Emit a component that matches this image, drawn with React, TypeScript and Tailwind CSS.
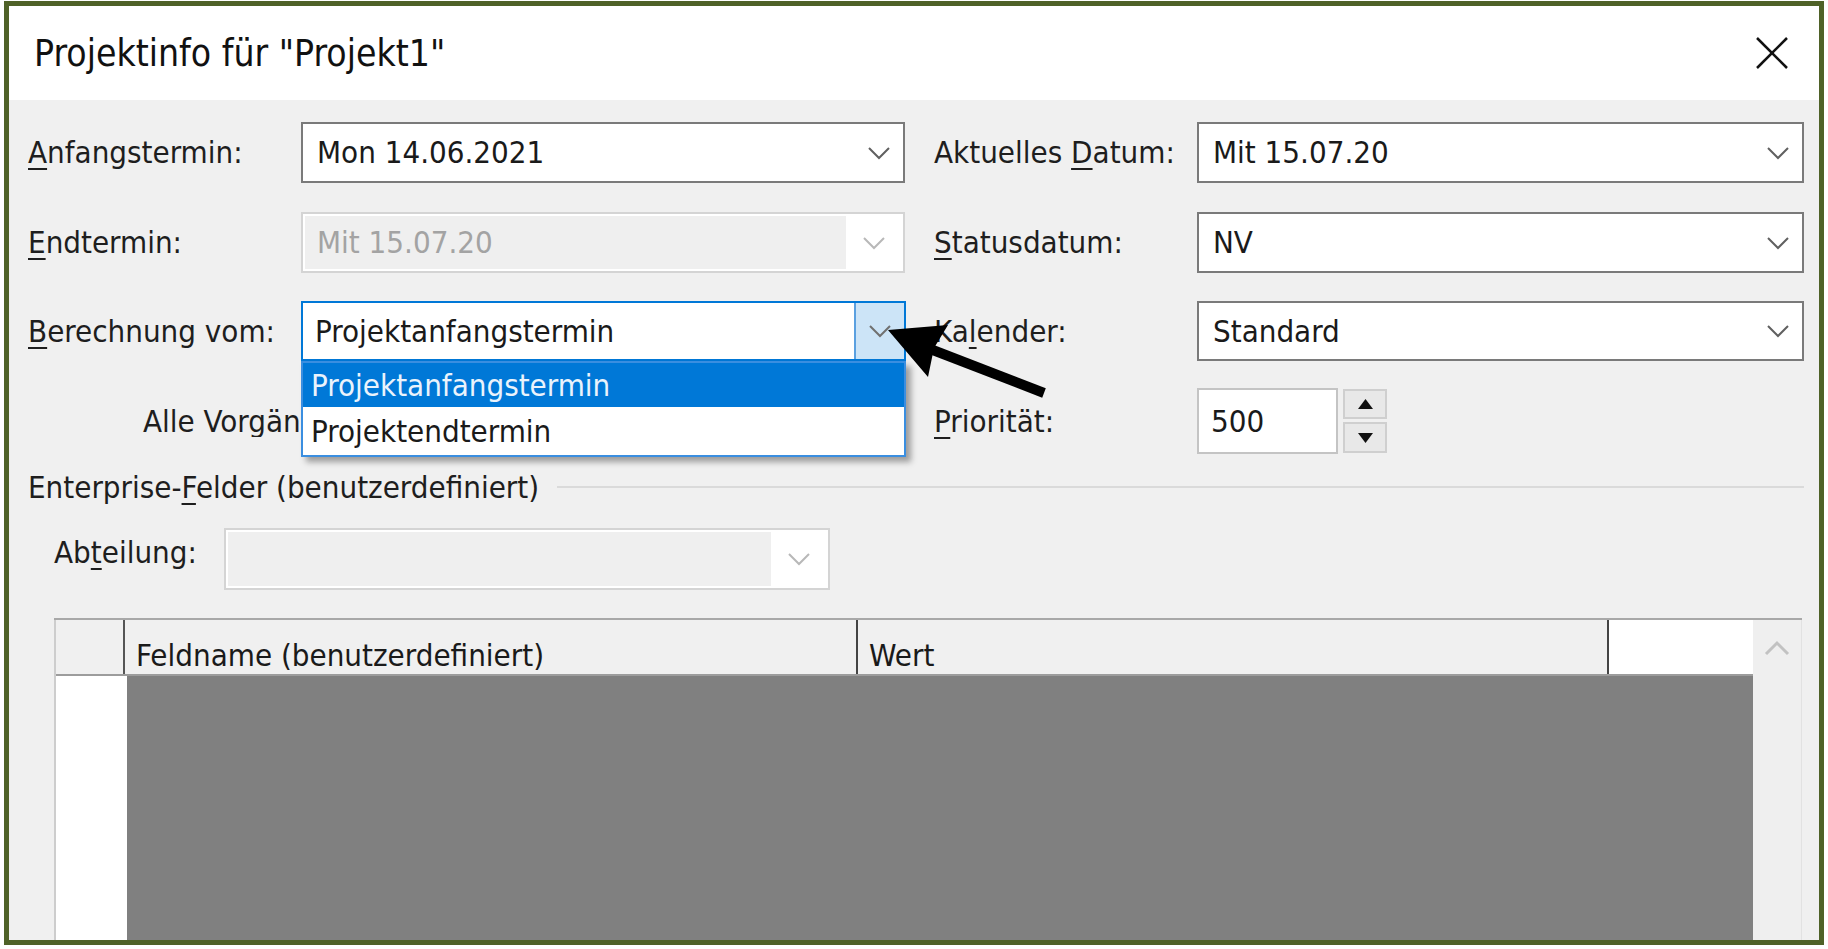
import React from "react";

const FONT = "font-['DejaVu_Sans_Condensed','Liberation_Sans_Narrow',sans-serif]";

function Chevron({ color = "#606060" }: { color?: string }) {
  return (
    <svg width="24" height="14" viewBox="0 0 24 14">
      <polyline points="2,2 12,12 22,2" fill="none" stroke={color} strokeWidth="2" />
    </svg>
  );
}

function U({ children }: { children: React.ReactNode }) {
  return <span className="underline decoration-2 underline-offset-[5px]">{children}</span>;
}

function Combo({ value, width }: { value: string; width: string }) {
  return (
    <div className={`flex h-full items-center border-2 border-[#7a7a7a] bg-white ${width}`}>
      <div className="flex-1 whitespace-nowrap pl-[14px] text-[31px] leading-none text-[#1a1a1a]">{value}</div>
      <div className="flex w-[48px] justify-center">
        <Chevron />
      </div>
    </div>
  );
}

function DisabledCombo({ value, width }: { value: string; width: string }) {
  return (
    <div className={`flex h-full border-2 border-[#d4d4d4] bg-white p-[2px] ${width}`}>
      <div className="flex flex-1 items-center whitespace-nowrap bg-[#efefef] pl-[12px] text-[31px] leading-none text-[#a3a3a3]">
        {value}
      </div>
      <div className="flex w-[55px] items-center justify-center">
        <Chevron color="#b8b8b8" />
      </div>
    </div>
  );
}

function FocusedCombo({ value }: { value: string }) {
  return (
    <div className="flex h-full w-[605px] items-stretch border-2 border-[#0078d7] bg-white">
      <div className="flex flex-1 items-center whitespace-nowrap pl-[12px] text-[31px] leading-none text-[#1a1a1a]">
        {value}
      </div>
      <div className="flex w-[50px] items-center justify-center border-l-2 border-[#5aa0e0] bg-[#cce4f7]">
        <Chevron color="#707070" />
      </div>
    </div>
  );
}

function Label({ children, width }: { children: React.ReactNode; width: string }) {
  return <div className={`${width} whitespace-nowrap text-[31px] leading-none text-[#1e1e1e]`}>{children}</div>;
}

export default function App() {
  return (
    <div className={`relative h-[949px] w-[1828px] overflow-hidden bg-white ${FONT}`}>
      <div className="ml-[4px] mt-[1px] flex h-[944px] w-[1820px] flex-col border-[5px] border-[#4f6228]">
        {/* Title bar */}
        <div className="flex h-[94px] shrink-0 items-center justify-between bg-white pl-[25px] pr-[30px]">
          <div className="text-[37px] leading-none text-[#111]">Projektinfo für "Projekt1"</div>
          <svg width="34" height="32" viewBox="0 0 34 32">
            <line x1="2" y1="1" x2="32" y2="31" stroke="#111" strokeWidth="2.5" />
            <line x1="32" y1="1" x2="2" y2="31" stroke="#111" strokeWidth="2.5" />
          </svg>
        </div>

        {/* Body */}
        <div className="flex flex-1 flex-col overflow-hidden bg-[#f0f0f0] pl-[19px] pr-[15px]">
          {/* Row 1 */}
          <div className="mt-[22px] flex h-[61px] items-center">
            <Label width="w-[273px]">
              <U>A</U>nfangstermin:
            </Label>
            <Combo value="Mon 14.06.2021" width="w-[604px]" />
            <div className="w-[29px]" />
            <Label width="w-[263px]">
              Aktuelles <U>D</U>atum:
            </Label>
            <Combo value="Mit 15.07.20" width="w-[607px]" />
          </div>

          {/* Row 2 */}
          <div className="mt-[29px] flex h-[61px] items-center">
            <Label width="w-[273px]">
              <U>E</U>ndtermin:
            </Label>
            <DisabledCombo value="Mit 15.07.20" width="w-[604px]" />
            <div className="w-[29px]" />
            <Label width="w-[263px]">
              <U>S</U>tatusdatum:
            </Label>
            <Combo value="NV" width="w-[607px]" />
          </div>

          {/* Row 3 */}
          <div className="mt-[28px] flex h-[60px] items-center">
            <Label width="w-[273px]">
              <U>B</U>erechnung vom:
            </Label>
            <FocusedCombo value="Projektanfangstermin" />
            <div className="w-[28px]" />
            <Label width="w-[263px]">
              Ka<U>l</U>ender:
            </Label>
            <Combo value="Standard" width="w-[607px]" />
          </div>

          {/* Row 4 */}
          <div className="mt-[27px] flex h-[66px] items-center">
            <div className="w-[273px] overflow-hidden whitespace-nowrap pl-[115px] text-[31px] leading-none text-[#1e1e1e]">
              Alle Vorgänge beginnen so früh wie möglich.
            </div>
            <div className="w-[633px]" />
            <Label width="w-[263px]">
              <U>P</U>riorität:
            </Label>
            <div className="flex h-full w-[141px] items-center border-2 border-[#c4c4c4] bg-white pl-[12px] text-[31px] leading-none text-[#1a1a1a]">
              500
            </div>
            <div className="ml-[5px] flex h-[64px] w-[44px] flex-col justify-between">
              <div className="flex h-[30px] items-center justify-center border-2 border-[#cfcfcf] bg-[#e8e8e8]">
                <svg width="15" height="10" viewBox="0 0 15 10">
                  <polygon points="7.5,0 15,10 0,10" fill="#111" />
                </svg>
              </div>
              <div className="flex h-[31px] items-center justify-center border-2 border-[#cfcfcf] bg-[#e8e8e8]">
                <svg width="15" height="10" viewBox="0 0 15 10">
                  <polygon points="0,0 15,0 7.5,10" fill="#111" />
                </svg>
              </div>
            </div>
          </div>

          {/* Separator */}
          <div className="mt-[13px] flex h-[40px] items-center">
            <div className="whitespace-nowrap text-[31px] leading-none text-[#1e1e1e]">
              Enterprise-<U>F</U>elder (benutzerdefiniert)
            </div>
            <div className="ml-[18px] h-[2px] flex-1 bg-[#dadada]" />
          </div>

          {/* Abteilung */}
          <div className="mt-[21px] flex h-[62px] items-center">
            <Label width="ml-[26px] w-[170px] pb-[14px]">
              Ab<U>t</U>eilung:
            </Label>
            <DisabledCombo value="" width="w-[606px]" />
          </div>

          {/* Table */}
          <div className="ml-[26px] mr-[2px] mt-[28px] flex flex-1 border-t-2 border-[#a8a8a8]">
            <div className="flex flex-1 flex-col border-l-2 border-[#cdcdcd]">
              <div className="flex h-[56px] shrink-0 border-b-2 border-[#9c9c9c]">
                <div className="w-[69px] border-r-2 border-[#555] bg-[#f0f0f0]" />
                <div className="flex w-[733px] items-end border-r-2 border-[#444] bg-[#f0f0f0] pb-[3px] pl-[11px] text-[31px] leading-none text-[#1a1a1a]">
                  Feldname (benutzerdefiniert)
                </div>
                <div className="flex w-[751px] items-end border-r-2 border-[#444] bg-[#f0f0f0] pb-[3px] pl-[11px] text-[31px] leading-none text-[#1a1a1a]">
                  Wert
                </div>
                <div className="flex-1 bg-white" />
              </div>
              <div className="flex flex-1">
                <div className="w-[71px] bg-white" />
                <div className="flex-1 bg-[#808080]" />
              </div>
            </div>
            <div className="flex w-[49px] justify-center border-r border-[#e2e2e2] bg-[#efefef] pt-[20px]">
              <svg width="26" height="16" viewBox="0 0 26 16">
                <polyline points="2,14 13,3 24,14" fill="none" stroke="#c2c2c2" strokeWidth="3" />
              </svg>
            </div>
          </div>
        </div>
      </div>

      {/* Dropdown list overlay */}
      <div className="absolute left-[301px] top-[361px] flex w-[605px] flex-col border-2 border-[#3a8ee0] bg-white shadow-[5px_5px_6px_rgba(0,0,0,0.35)]">
        <div className="flex h-[44px] items-center bg-[#0078d7] pl-[8px] text-[31px] leading-none text-[#eaf3fc]">
          Projektanfangstermin
        </div>
        <div className="flex h-[48px] items-center bg-white pl-[8px] text-[31px] leading-none text-[#1a1a1a]">
          Projektendtermin
        </div>
      </div>

      {/* Annotation arrow */}
      <svg className="absolute left-0 top-0" width="1828" height="949" viewBox="0 0 1828 949">
        <line x1="925" y1="347" x2="1044" y2="393" stroke="#000" strokeWidth="10" />
        <polygon points="888,330 948,325 934,348 928,377" fill="#000" />
      </svg>
    </div>
  );
}
